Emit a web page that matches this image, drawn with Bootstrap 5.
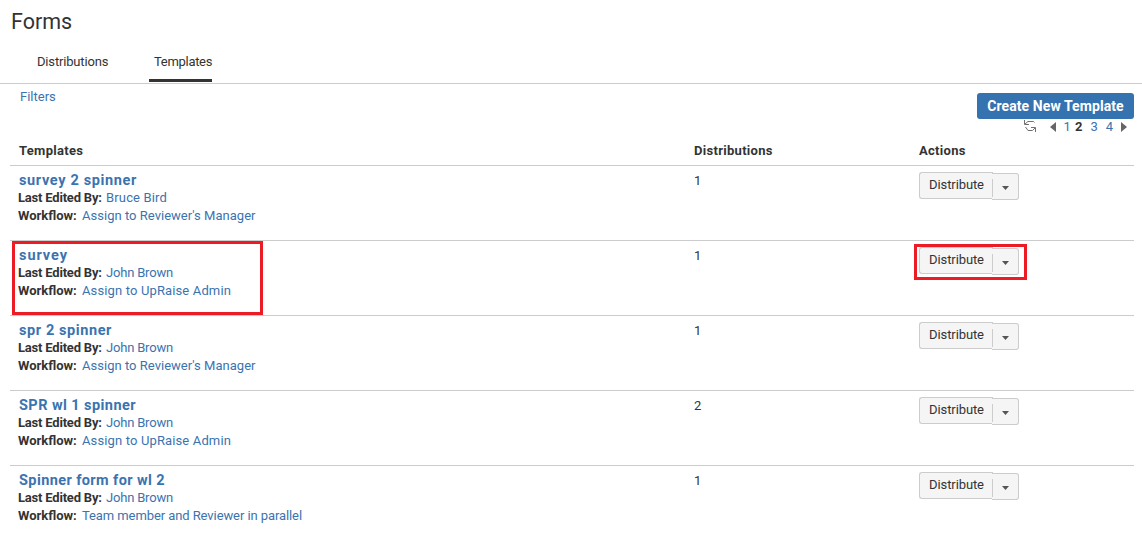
<!DOCTYPE html>
<html lang="en">
<head>
    <meta charset="UTF-8">
    <meta name="viewport" content="width=device-width, initial-scale=1.0">
    <title>Forms</title>
    <link href="https://cdn.jsdelivr.net/npm/bootstrap@5.3.0/dist/css/bootstrap.min.css" rel="stylesheet">
    <style>
        body { font-family: Roboto, "Liberation Sans", sans-serif; font-size: 13px; line-height: 18px; color: #333; background-color: #fff; height: 539px; overflow: hidden; }
        a { color: #3b73af; text-decoration: none; }
        h1 { font-size: 21.5px; line-height: 30px; font-weight: 400; padding: 7px 0 0 11px; }
        .form-tabs { height: 47px; border-bottom: 1px solid #ccc; padding-left: 32px; }
        .form-tabs .nav-item { width: 76px; }
        .form-tabs .nav-link { color: #333; padding: 16px 0 0 5px; height: 45px; letter-spacing: -.17px; white-space: nowrap; }
        .form-tabs .nav-link.active { border-bottom: 3px solid #333; width: 63px; letter-spacing: -.3px; }
        .form-tabs .nav-item + .nav-item { margin-left: 41px; }
        .toolbar { height: 52px; padding: 4px 8px 0 20px; }
        .btn-create { background-color: #3572b0; color: #fff; font-size: 14px; font-weight: 700; line-height: 18px; width: 157px; height: 26px; padding: 4px 0; border: 0; border-radius: 3px; margin-top: 5px; white-space: nowrap; letter-spacing: .08px; }
        .pager { height: 16px; line-height: 16px; padding-right: 7px; }
        .pager svg { display: block; }
        .pager .refresh { margin-top: -3px; margin-right: 14px; }
        .form-table { width: 1124px; margin-left: 10px; table-layout: fixed; }
        .form-table > thead th { height: 29px; padding: 6px 9px 0; line-height: 18px; vertical-align: top; border-bottom: 1px solid #ccc; color: #333; letter-spacing: .3px; }
        .form-table > tbody td { height: 75px; padding: 5px 9px 0; vertical-align: top; border-bottom: 1px solid #ccc; color: #333; }
        .form-table > tbody tr:last-child td { border-bottom: 0; }
        .form-name { display: block; font-size: 14.5px; font-weight: 700; line-height: 18px; height: 18px; padding-top: 1px; }
        .form-meta { display: flex; height: 18px; margin-left: -1px; white-space: nowrap; }
        .meta-editor { width: 88px; letter-spacing: -.2px; }
        .meta-flow { width: 64px; }
        .split-btn { margin-top: 1px; }
        .split-btn .btn { background-color: #f5f5f5; border: 1px solid #ccc; color: #333; font-size: 13px; line-height: 18px; padding: 0; height: 27px; }
        .split-btn .btn-main { width: 74px; padding-bottom: 1px; border-right: 0; border-radius: 3px 0 0 3px; letter-spacing: -.1px; }
        .split-btn .btn-more { width: 27px; margin: 1px 0 0 -1px; border-left: 0; border-radius: 0 3px 3px 0; }
        .split-btn .btn-more svg { display: block; }
        .form-count { padding-top: 1px; }
        .marked { position: relative; }
        /* red callouts laid over the highlighted row */
        .callout-box { position: absolute; border: 3px solid #ed1c24; pointer-events: none; }
        .callout-name { left: 2px; top: 0; width: 251px; height: 74px; }
        .callout-action { left: 4px; top: 3px; width: 113px; height: 36px; }
    </style>
</head>
<body>
    <h1 class="m-0">Forms</h1>
    <ul class="nav form-tabs">
        <li class="nav-item"><a class="nav-link" href="#">Distributions</a></li>
        <li class="nav-item"><a class="nav-link active" href="#">Templates</a></li>
    </ul>
    <div class="toolbar d-flex justify-content-between">
        <a href="#">Filters</a>
        <div class="d-flex flex-column align-items-end">
            <button class="btn btn-create" type="button">Create New Template</button>
            <div class="pager d-flex align-items-center">
                <svg class="refresh" width="12" height="12" viewBox="0 0 12 12" fill="none" stroke="#707070"><path d="M.5 0v4.500H5M1 4l3-2.500h5.500l1 1M11.500 12V7.500H7M11 8l-2.500 2.500H4L1.500 7"/></svg>
                <svg width="6" height="10" viewBox="0 0 6 10"><path d="M6 0v10L0 5z" fill="#666"/></svg>
                <a class="ms-2" href="#">1</a>
                <b class="ms-1">2</b>
                <a class="ms-2" href="#">3</a>
                <a class="ms-2" href="#">4</a>
                <svg class="ms-2" width="6" height="10" viewBox="0 0 6 10"><path d="M0 0v10l6-5z" fill="#666"/></svg>
            </div>
        </div>
    </div>
    <table class="table form-table mb-0">
        <colgroup><col style="width: 675px"><col style="width: 225px"><col></colgroup>
        <thead>
            <tr><th>Templates</th><th>Distributions</th><th>Actions</th></tr>
        </thead>
        <tbody id="formRows"></tbody>
    </table>
    <script>
        // width: drawn width of the form name, used to space its letters
        const forms = [
            { name: 'survey 2 spinner', width: 118, editor: 'Bruce Bird', workflow: "Assign to Reviewer's Manager", count: 1 },
            { name: 'survey', width: 49, editor: 'John Brown', workflow: 'Assign to UpRaise Admin', count: 1, marked: true },
            { name: 'spr 2 spinner', width: 93, editor: 'John Brown', workflow: "Assign to Reviewer's Manager", count: 1 },
            { name: 'SPR wl 1 spinner', width: 117, editor: 'John Brown', workflow: 'Assign to UpRaise Admin', count: 2 },
            { name: 'Spinner form for wl 2', width: 146, editor: 'John Brown', workflow: 'Team member and Reviewer in parallel', count: 1 }
        ];
        const widths = { 'Bruce Bird': 61, 'John Brown': 67, "Assign to Reviewer's Manager": 173.5, 'Assign to UpRaise Admin': 149, 'Team member and Reviewer in parallel': 220 };
        document.getElementById('formRows').innerHTML = forms.map(f => `
            <tr>
                <td class="marked">
                    <a class="form-name" href="#"><span data-width="${f.width}">${f.name}</span></a>
                    <div class="form-meta"><b class="meta-editor">Last Edited By:</b><a href="#" data-width="${widths[f.editor]}">${f.editor}</a></div>
                    <div class="form-meta"><b class="meta-flow">Workflow:</b><a href="#" data-width="${widths[f.workflow]}">${f.workflow}</a></div>
                    ${f.marked ? '<span class="callout-box callout-name"></span>' : ''}
                </td>
                <td><div class="form-count">${f.count}</div></td>
                <td class="marked">
                    <div class="split-btn d-flex">
                        <button class="btn btn-main" type="button">Distribute</button>
                        <button class="btn btn-more" type="button" aria-label="More"><svg width="26" height="25" viewBox="0 0 26 25"><path d="M.5 5v18" stroke="#ccc"/><path d="M10 12h7l-3.500 4z" fill="#555"/></svg></button>
                    </div>
                    ${f.marked ? '<span class="callout-box callout-action"></span>' : ''}
                </td>
            </tr>`).join('');
        document.querySelectorAll('[data-width]').forEach(el => {
            const extra = el.dataset.width - el.getBoundingClientRect().width;
            el.style.letterSpacing = extra / el.textContent.length + 'px';
        });
    </script>
    <script src="https://cdn.jsdelivr.net/npm/bootstrap@5.3.0/dist/js/bootstrap.bundle.min.js"></script>
</body>
</html>
